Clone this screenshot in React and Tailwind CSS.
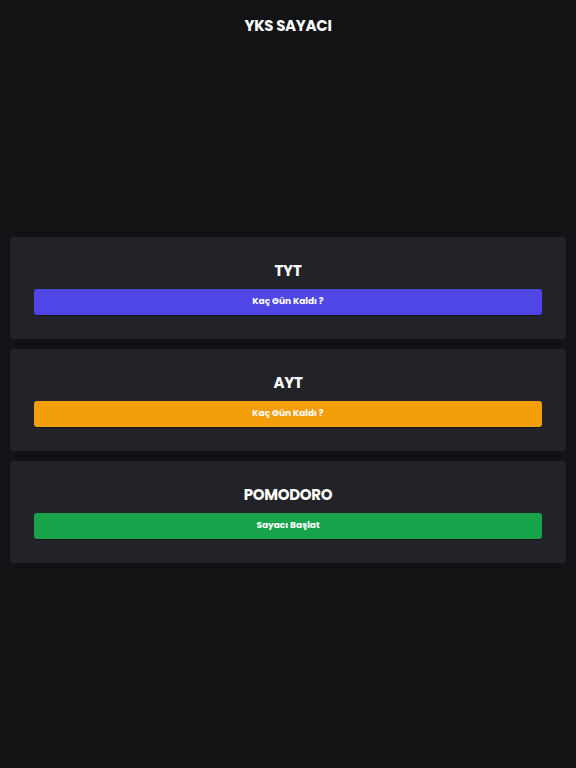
export default function App() {
  const font = { fontFamily: 'Poppins, Inter, "Noto Sans", sans-serif' };
  const cards = [
    { title: "TYT", label: "Kaç Gün Kaldı ?", color: "bg-[#4f46e5]" },
    { title: "AYT", label: "Kaç Gün Kaldı ?", color: "bg-[#f59e0b]" },
    { title: "POMODORO", label: "Sayacı Başlat", color: "bg-[#16a34a]" },
  ];
  return (
    <div className="min-h-[768px] w-full bg-[#131316] text-white" style={font}>
      <header className="h-[52px] flex items-center justify-center">
        <h1 className="text-[15px] font-bold tracking-[-0.02em]">YKS SAYACI</h1>
      </header>
      <main className="mt-[185px] flex flex-col gap-[10px] px-[10px]">
        {cards.map((c) => (
          <div key={c.title} className="rounded bg-[#222328] px-6 pt-6 pb-6 flex flex-col items-stretch">
            <h2 className="text-center text-[15px] leading-5 font-bold tracking-[-0.02em] mb-2">{c.title}</h2>
            <button className={`${c.color} h-[26px] rounded-[3px] text-[9px] font-bold text-white shadow-[0_1px_0_rgba(0,0,0,0.35)]`}>
              {c.label}
            </button>
          </div>
        ))}
      </main>
    </div>
  );
}
